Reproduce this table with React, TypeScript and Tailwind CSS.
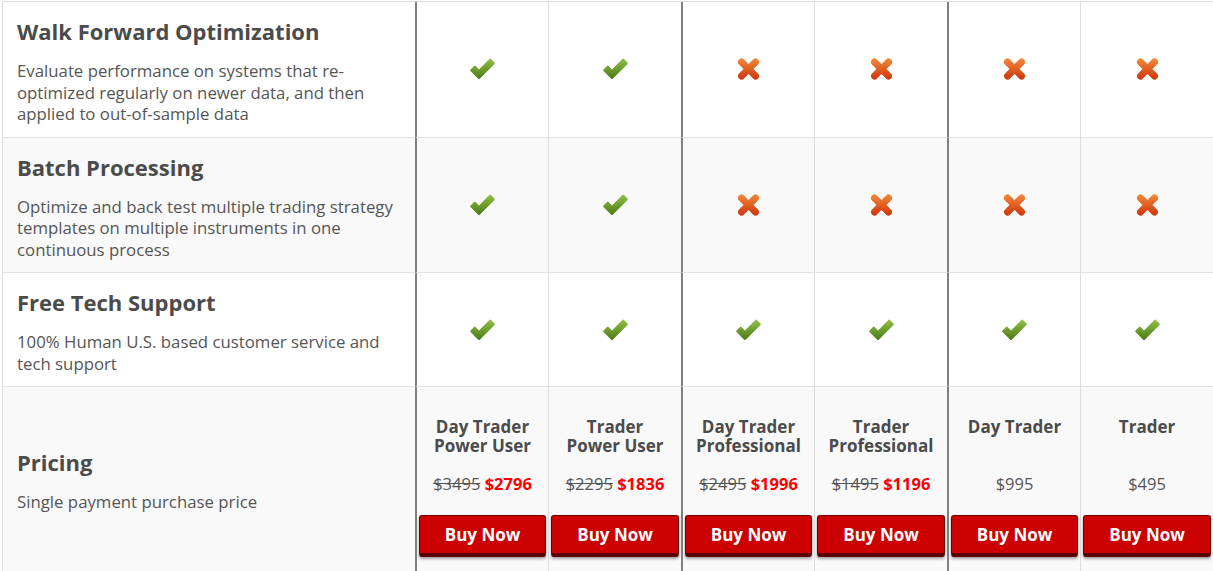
import React from "react";

type Mark = "yes" | "no";

const features: { title: string; desc: string; marks: Mark[]; shade: boolean }[] = [
  {
    title: "Walk Forward Optimization",
    desc: "Evaluate performance on systems that re-optimized regularly on newer data, and then applied to out-of-sample data",
    marks: ["yes", "yes", "no", "no", "no", "no"],
    shade: false,
  },
  {
    title: "Batch Processing",
    desc: "Optimize and back test multiple trading strategy templates on multiple instruments in one continuous process",
    marks: ["yes", "yes", "no", "no", "no", "no"],
    shade: true,
  },
  {
    title: "Free Tech Support",
    desc: "100% Human U.S. based customer service and tech support",
    marks: ["yes", "yes", "yes", "yes", "yes", "yes"],
    shade: false,
  },
];

const plans = [
  { name: ["Day Trader", "Power User"], old: "$3495", price: "$2796" },
  { name: ["Trader", "Power User"], old: "$2295", price: "$1836" },
  { name: ["Day Trader", "Professional"], old: "$2495", price: "$1996" },
  { name: ["Trader", "Professional"], old: "$1495", price: "$1196" },
  { name: ["Day Trader"], old: null, price: "$995" },
  { name: ["Trader"], old: null, price: "$495" },
];

function Check() {
  return (
    <svg width="27" height="22" viewBox="0 0 27 22">
      <defs>
        <linearGradient id="ck" x1="0" y1="0" x2="0" y2="1">
          <stop offset="0" stopColor="#93c047" />
          <stop offset="1" stopColor="#4a7a18" />
        </linearGradient>
      </defs>
      <path
        d="M1.5 11.5 L5 8 Q5.8 7.2 6.6 8 L10 11.4 L20.4 1 Q21.2 0.2 22 1 L25.5 4.5 Q26.3 5.3 25.5 6.1 L11 20.6 Q10 21.6 9 20.6 L1.5 13.1 Q0.7 12.3 1.5 11.5 Z"
        fill="url(#ck)"
      />
    </svg>
  );
}

function Cross() {
  return (
    <svg width="23" height="22" viewBox="0 0 23 22">
      <defs>
        <linearGradient id="cx" x1="0" y1="0" x2="0" y2="22" gradientUnits="userSpaceOnUse">
          <stop offset="0" stopColor="#f48a3a" />
          <stop offset="1" stopColor="#cc340a" />
        </linearGradient>
      </defs>
      <g stroke="url(#cx)" strokeWidth="7" strokeLinecap="round">
        <line x1="4.5" y1="4" x2="18.5" y2="18" />
        <line x1="18.5" y1="4" x2="4.5" y2="18" />
      </g>
    </svg>
  );
}

function borderFor(i: number) {
  return i % 2 === 0 ? "border-l-2 border-l-[#7f7f7f]" : "border-l border-l-[#dcdcdc]";
}

export default function App() {
  return (
    <div
      className="min-h-screen bg-white pt-px pl-[2px] text-[#555]"
      style={{ fontFamily: '"Open Sans", "Noto Sans", sans-serif' }}
    >
      <div className="grid grid-cols-[412px_repeat(6,1fr)] border-t border-l border-[#dcdcdc]">
        {features.map((f) => (
          <React.Fragment key={f.title}>
            <div className={`border-b border-[#e2e2e2] pl-[14px] pr-[11px] pt-[17px] pb-[12px] ${f.shade ? "bg-[#f9f9f9]" : "bg-white"}`}>
              <div className="text-[22px] font-bold leading-[24px] text-[#4b4b4b]">{f.title}</div>
              <p className="mt-[17px] text-[16.8px] leading-[21.5px] text-[#555]">{f.desc}</p>
            </div>
            {f.marks.map((m, i) => (
              <div
                key={i}
                className={`flex items-center justify-center border-b border-b-[#e2e2e2] ${borderFor(i)} ${f.shade ? "bg-[#f9f9f9]" : "bg-white"}`}
              >
                {m === "yes" ? <Check /> : <Cross />}
              </div>
            ))}
          </React.Fragment>
        ))}

        <div className="h-[190px] bg-[#f9f9f9] pl-[14px] pr-[11px] pt-[63px]">
          <div className="text-[22px] font-bold leading-[24px] text-[#4b4b4b]">Pricing</div>
          <p className="mt-[17px] text-[16.8px] leading-[21.5px] text-[#555]">Single payment purchase price</p>
        </div>
        {plans.map((p, i) => (
          <div key={i} className={`flex flex-col bg-[#f9f9f9] pt-[30px] text-center ${borderFor(i)}`}>
            <div className="h-[38px] text-[17px] font-bold leading-[19px] text-[#4b4b4b]">
              {p.name.map((n) => (
                <div key={n}>{n}</div>
              ))}
            </div>
            <div className="mt-[18px] text-[16.5px] leading-[22px]">
              {p.old ? (
                <>
                  <span className="text-[#555] line-through">{p.old}</span>{" "}
                  <span className="font-bold text-[#ff0000]">{p.price}</span>
                </>
              ) : (
                <span className="text-[#555]">{p.price}</span>
              )}
            </div>
            <div className="mt-[20px] px-[2px]">
              <button className="h-[42px] w-full rounded-[3px] border border-[#6e0000] border-b-[4px] border-b-[#5a0000] bg-[#cc0000] text-[17px] font-bold text-white shadow-[0_2px_3px_rgba(0,0,0,0.35)]">
                Buy Now
              </button>
            </div>
          </div>
        ))}
      </div>
    </div>
  );
}
